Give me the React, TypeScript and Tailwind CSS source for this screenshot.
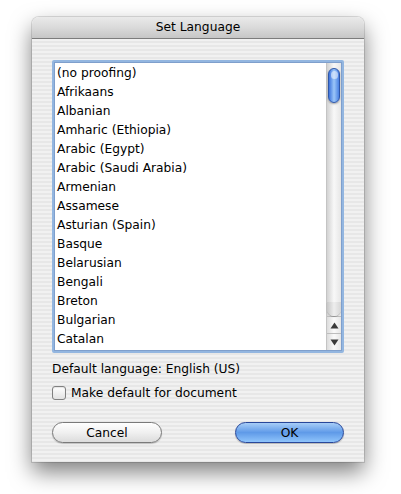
import React from "react";

const languages = [
  "(no proofing)",
  "Afrikaans",
  "Albanian",
  "Amharic (Ethiopia)",
  "Arabic (Egypt)",
  "Arabic (Saudi Arabia)",
  "Armenian",
  "Assamese",
  "Asturian (Spain)",
  "Basque",
  "Belarusian",
  "Bengali",
  "Breton",
  "Bulgarian",
  "Catalan",
  "Chinese (Hong Kong SAR)",
];

const font = { fontFamily: '"DejaVu Sans", "Liberation Sans", sans-serif' };

const Scrollbar = () => (
  <div className="flex w-[15px] shrink-0 flex-col border-l border-[#c4c4c4]">
    {/* TRACK */}
    <div className="relative flex-1 bg-gradient-to-r from-[#d2d2d2] via-[#f8f8f8] to-[#e6e6e6]">
      <div className="absolute left-[1px] right-[1px] top-[5px] h-[35px] rounded-full border border-[#2d56a8] bg-gradient-to-r from-[#3f74dc] via-[#9cc6f8] to-[#4a80e2] shadow-[0_1px_2px_rgba(0,0,0,0.35)]">
        <div className="mx-auto mt-[2px] h-[8px] w-[7px] rounded-full bg-white/50" />
      </div>
      <div className="absolute bottom-0 left-0 right-0 h-[14px] rounded-b-full bg-gradient-to-r from-[#c6c6c6] via-[#eeeeee] to-[#d6d6d6] shadow-[0_1px_1px_rgba(0,0,0,0.25)]" />
    </div>
    {/* ARROWS */}
    <div className="flex h-[17px] items-center justify-center border-t border-[#bdbdbd] bg-gradient-to-r from-[#dcdcdc] via-[#fafafa] to-[#e6e6e6]">
      <svg width="9" height="7" viewBox="0 0 9 7">
        <path d="M4.5 0.5 L8.5 6.5 L0.5 6.5 Z" fill="#3a3a3a" />
      </svg>
    </div>
    <div className="flex h-[17px] items-center justify-center border-t border-[#bdbdbd] bg-gradient-to-r from-[#dcdcdc] via-[#fafafa] to-[#e6e6e6]">
      <svg width="9" height="7" viewBox="0 0 9 7">
        <path d="M0.5 0.5 L8.5 0.5 L4.5 6.5 Z" fill="#3a3a3a" />
      </svg>
    </div>
  </div>
);

const App = () => {
  return (
    <div className="h-[494px] w-[401px] bg-white pl-[32px] pt-[17px]" style={font}>
      {/* WINDOW */}
      <div className="w-[332px] overflow-hidden rounded-t-[7px] shadow-[0_10px_22px_rgba(0,0,0,0.5),0_0_0_1px_rgba(0,0,0,0.12)]">
        {/* TITLE BAR */}
        <div className="flex h-[22px] items-center justify-center border-b border-[#7c7c7c] bg-gradient-to-b from-[#eaeaea] via-[#dadada] to-[#c6c6c6] text-[12.25px] text-black">
          Set Language
        </div>

        {/* BODY */}
        <div className="bg-[image:repeating-linear-gradient(180deg,#f1f1f1_0px,#f1f1f1_2px,#e7e7e7_2px,#e7e7e7_4px)] px-[20px] pb-[19px] pt-[21px]">
          {/* LIST BOX */}
          <div className="flex h-[293px] w-[292px] rounded-[2px] border-[2px] border-[#93b6e0] shadow-[inset_0_0_0_1px_#7f9fcc]">
            <div className="m-[1px] flex flex-1 overflow-hidden bg-white">
              <div className="flex-1 overflow-hidden pl-[2px] pt-[1px] text-[12.25px] text-black">
                {languages.map((lang) => (
                  <div key={lang} className="h-[19px] whitespace-nowrap leading-[19px]">
                    {lang}
                  </div>
                ))}
              </div>
              <Scrollbar />
            </div>
          </div>

          {/* DEFAULT LANGUAGE */}
          <div className="mt-[8px] text-[12.25px] leading-[17px] text-black">
            Default language: English (US)
          </div>

          {/* CHECKBOX */}
          <div className="mt-[6px] flex items-center gap-[5px] text-[12.25px] text-black">
            <div className="h-[14px] w-[14px] rounded-[3px] border border-[#808080] bg-gradient-to-b from-[#ffffff] to-[#e2e2e2] shadow-[inset_0_1px_1px_rgba(0,0,0,0.1)]" />
            <span>Make default for document</span>
          </div>

          {/* BUTTONS */}
          <div className="mt-[20px] flex justify-between">
            <button className="h-[21px] w-[110px] rounded-full border border-[#7a7a7a] bg-gradient-to-b from-[#ffffff] via-[#f0f0f0] to-[#dcdcdc] text-[12.25px] text-black shadow-[0_1px_1px_rgba(0,0,0,0.2)]">
              Cancel
            </button>
            <button className="h-[21px] w-[109px] rounded-full border border-[#28479a] bg-gradient-to-b from-[#a7cdf7] via-[#5f9ae8] to-[#8fc4fb] text-[12.25px] text-black shadow-[0_1px_1px_rgba(0,0,0,0.25)]">
              OK
            </button>
          </div>
        </div>
      </div>
    </div>
  );
};

export default App;
